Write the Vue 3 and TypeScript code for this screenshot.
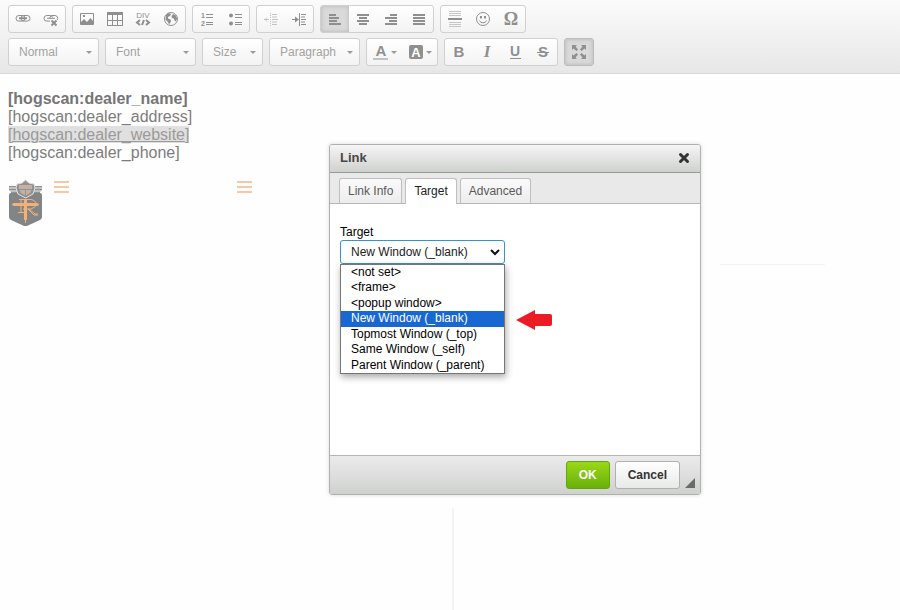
<script setup lang="ts">
import { ref } from 'vue'

interface Shape { d: string; line?: number; faint?: boolean }
interface Glyph { t: string; x: number; y: number; size: number; serif?: boolean; bold?: boolean; italic?: boolean }
interface Tool { id: string; label: string; shapes?: Shape[]; glyphs?: Glyph[]; on?: boolean; off?: boolean }

const circle = 'M8 1.5a6.5 6.5 0 1 1 0 13a6.5 6.5 0 1 1 0-13z'

const topRow: Tool[][] = [
  [
    { id: 'link', label: 'Link', shapes: [
      { d: 'M3.800 4.500h3.400a2.800 2.800 0 0 1 0 5.600H3.800a2.800 2.800 0 0 1 0-5.600zM8.800 4.500h3.400a2.800 2.800 0 0 1 0 5.600H8.800a2.800 2.800 0 0 1 0-5.600z', line: 1 },
      { d: 'M4 7.300h8', line: 2 },
    ] },
    { id: 'unlink', label: 'Unlink', shapes: [
      { d: 'M7 10.100H3.800a2.800 2.800 0 0 1 0-5.600h3.400a2.800 2.800 0 0 1 2.500 2M7 8a2.800 2.800 0 0 1 1.800-3.500h3.400a2.800 2.800 0 0 1 2 4.500', line: 1 },
      { d: 'M4 7.300h8', line: 1 },
      { d: 'M8.500 9.500l5 5M13.500 9.500l-5 5', line: 2 },
    ] },
  ],
  [
    { id: 'image', label: 'Image', shapes: [
      { d: 'M1.500 2.500h13v11h-13z', line: 1 },
      { d: 'M2 13v-2l3-3l3 3l3.500-4l2.500 3v3zM4 4h2v2h-2z' },
    ] },
    { id: 'table', label: 'Table', shapes: [
      { d: 'M0 1h16v3H0z' },
      { d: 'M.5 3.500v11h15v-11M5.500 4v10M10.500 4v10M0 9.500h16M0 14.500h16', line: 1 },
    ] },
    { id: 'div', label: 'Create Div Container', glyphs: [{ t: 'DIV', x: 8, y: 7, size: 8 }], shapes: [
      { d: 'M5 9l-3 2.500l3 2.500M11 9l3 2.500l-3 2.500M9 9l-2 5', line: 2 },
    ] },
    { id: 'iframe', label: 'IFrame', shapes: [
      { d: circle, line: 1 },
      { d: 'M3 4l3-2l2 1l-1 2l-2 1l0 1.500l2.500 1l.5 2l-2 3l-1-2.500l-2.500-2.500zM10 3l3 1.500l1 3l-1 3l-1.500-1l-.5-2l-2-.5l-.5-2z' },
    ] },
  ],
  [
    { id: 'numbered', label: 'Numbered List', glyphs: [{ t: '1', x: 4, y: 7, size: 7, bold: true }, { t: '2', x: 4, y: 15, size: 7, bold: true }], shapes: [
      { d: 'M7 3.500h7M7 6.500h7M7 11.500h7M7 13.500h7', line: 1 },
    ] },
    { id: 'bulleted', label: 'Bulleted List', shapes: [
      { d: 'M4 2.500a2 2 0 1 1 0 4a2 2 0 1 1 0-4zM4 10.500a2 2 0 1 1 0 4a2 2 0 1 1 0-4z' },
      { d: 'M8 3.500h7M8 6.500h7M8 11.500h7M8 13.500h7', line: 1 },
    ] },
  ],
  [
    { id: 'outdent', label: 'Decrease Indent', off: true, shapes: [
      { d: 'M7.500 2v1M7.500 4v1M7.500 6v1M7.500 8v1M7.500 10v1M7.500 12v1M7.500 14v1M9 3.500h5M9 6h5M9 8.500h6M9 11h5M9 13.500h5M1 8.500h5M4 6.500l-2 2l2 2', line: 1 },
    ] },
    { id: 'indent', label: 'Increase Indent', shapes: [
      { d: 'M8.500 2v13M10 3.500h5M10 6h4M10 8.500h5M10 11h4M10 13.500h5M1 8.500h5', line: 1 },
      { d: 'M4 5.500l4 3l-4 3z' },
    ] },
  ],
  [
    { id: 'left', label: 'Align Left', on: true, shapes: [{ d: 'M2 4h7M2 7h10M2 10h8M2 13h12', line: 2 }] },
    { id: 'center', label: 'Center', shapes: [{ d: 'M2 4h12M4 7h8M2 10h12M4 13h8', line: 2 }] },
    { id: 'right', label: 'Align Right', shapes: [{ d: 'M7 4h7M2 7h12M6 10h8M2 13h12', line: 2 }] },
    { id: 'justify', label: 'Justify', shapes: [{ d: 'M2 4h12M2 7h12M2 10h12M2 13h12', line: 2 }] },
  ],
  [
    { id: 'rule', label: 'Insert Horizontal Line', shapes: [
      { d: 'M2 .5h12M2 2.500h12M2 4.500h12M2 11.500h12M2 13.500h12M2 15.500h12', line: 1, faint: true },
      { d: 'M1 8h14', line: 2 },
    ] },
    { id: 'smiley', label: 'Smiley', shapes: [
      { d: circle + 'M4.500 9.500c1 3 6 3 7 0', line: 1 },
      { d: 'M5 5h2v2.500h-2zM9 5h2v2.500h-2z' },
    ] },
    { id: 'special', label: 'Insert Special Character', glyphs: [{ t: 'Ω', x: 8, y: 14, size: 18, serif: true, bold: true }] },
  ],
]

const styles: Tool[] = [
  { id: 'bold', label: 'Bold', glyphs: [{ t: 'B', x: 8, y: 13, size: 15, bold: true }] },
  { id: 'italic', label: 'Italic', glyphs: [{ t: 'I', x: 8, y: 13, size: 17, bold: true, italic: true, serif: true }] },
  { id: 'underline', label: 'Underline', glyphs: [{ t: 'U', x: 8, y: 12, size: 14, bold: true }], shapes: [{ d: 'M3 14.500h11', line: 1 }] },
  { id: 'strike', label: 'Strikethrough', glyphs: [{ t: 'S', x: 8, y: 13, size: 15, bold: true }], shapes: [{ d: 'M2 8.500h12', line: 1 }] },
]

const combos = [
  { label: 'Normal', small: false },
  { label: 'Font', small: false },
  { label: 'Size', small: true },
  { label: 'Paragraph', small: false },
]

const tabs = ['Link Info', 'Target', 'Advanced']
const activeTab = ref('Target')
const options = [
  '<not set>',
  '<frame>',
  '<popup window>',
  'New Window (_blank)',
  'Topmost Window (_top)',
  'Same Window (_self)',
  'Parent Window (_parent)',
]
const target = ref('New Window (_blank)')
</script>

<template>
  <div class="editor">
    <header class="toolbar">
      <div class="row">
        <div v-for="(group, g) in topRow" :key="g" class="group">
          <button v-for="tool in group" :key="tool.id" type="button" class="tool" :class="{ on: tool.on, off: tool.off }" :aria-label="tool.label">
            <svg class="icon" viewBox="0 0 16 16" aria-hidden="true">
              <path v-for="(s, i) in tool.shapes" :key="i" :d="s.d" :class="{ stroke: s.line, faint: s.faint }" :stroke-width="s.line" />
              <text v-for="c in tool.glyphs" :key="c.t" :x="c.x" :y="c.y" :font-size="c.size" :class="{ serif: c.serif, bold: c.bold }">{{ c.t }}</text>
            </svg>
          </button>
        </div>
      </div>
      <div class="row">
        <button v-for="combo in combos" :key="combo.label" type="button" class="group combo" :class="{ small: combo.small }">
          <span>{{ combo.label }}</span><i class="caret"></i>
        </button>
        <div class="group">
          <button type="button" class="tool color" aria-label="Text Color">
            <svg class="icon" viewBox="0 0 16 16" aria-hidden="true">
              <text x="8" y="12" font-size="15" class="bold">A</text>
              <path d="M0 14h15v2H0z" class="swatch" />
            </svg>
            <i class="caret"></i>
          </button>
          <button type="button" class="tool color" aria-label="Background Color">
            <svg class="icon" viewBox="0 0 16 16" aria-hidden="true">
              <rect x="1" y="1" width="14" height="14" rx="2" />
              <text x="8" y="13" font-size="13" class="bold light">A</text>
            </svg>
            <i class="caret"></i>
          </button>
        </div>
        <div class="group">
          <button v-for="tool in styles" :key="tool.id" type="button" class="tool" :aria-label="tool.label">
            <svg class="icon" viewBox="0 0 16 16" aria-hidden="true">
              <text v-for="c in tool.glyphs" :key="c.t" :x="c.x" :y="c.y" :font-size="c.size" :class="{ serif: c.serif, bold: c.bold, italic: c.italic }">{{ c.t }}</text>
              <path v-for="(s, i) in tool.shapes" :key="i" :d="s.d" class="stroke" :stroke-width="s.line" />
            </svg>
          </button>
        </div>
        <div class="group pressed">
          <button type="button" class="tool on" aria-label="Maximize">
            <svg class="icon" viewBox="0 0 16 16" aria-hidden="true">
              <path d="M1 1h5L4.500 2.500l2.500 3l-1.500 1.500l-3-2.500L1 6zM15 1h-5l1.500 1.500L9 5.500l1.500 1.500l3-2.500L15 6zM1 15h5l-1.500-1.500L7 10.500l-1.500-1.500l-3 2.500L1 10zM15 15h-5l1.500-1.500L9 10.500l1.500-1.500l3 2.500L15 10z" />
            </svg>
          </button>
        </div>
      </div>
    </header>

    <main class="content">
      <p class="address">
        <strong>[hogscan:dealer_name]</strong><br />
        [hogscan:dealer_address]<br />
        <a href="#website">[hogscan:dealer_website]</a><br />
        [hogscan:dealer_phone]
      </p>
      <div class="brand">
        <svg class="badge" viewBox="0 0 35 48" role="img" aria-label="Dealer badge">
          <path d="M1 7h9v8H3v-2L1 11zM25 7h9v4l-2 2v2h-7z" fill="#8f9193" />
          <path d="M1 9h9M2 12h8M25 9h9M25 12h8" stroke="#eeeeee" />
          <path d="M1 16q0-2 2-2h29q2 0 2 2v22q0 2-2 3l-12 5.500q-2.500 1-5 0L3 41q-2-1-2-3z" fill="#828486" />
          <path d="M9 5l5-1 3.500-3L21 4l5 1 1 4-2 6-7.500 4L10 15 8 9z" fill="#8f9193" stroke="#e2e2e2" />
          <path d="M11 6h13v4l-2 4-4.500 2.500L13 14l-2-4z" fill="#c0b2aa" />
          <path d="M12 7.500h11M14 13.500h7" stroke="#e2a981" />
          <path d="M10 10.500h15M17.500 10v6" stroke="#909294" />
          <g fill="none" stroke="#efb27c">
            <path d="M4 25.500l2-1h23l2 1-2 1H6z" fill="#efb27c" />
            <path d="M11 20.500h12q5 1 5 4.500t-5 5h-8M13 20v13M10 33.500h7M21 30l6 5h3M20 30l6 6h4" />
            <path d="M17.500 20v21" stroke-width="3" />
            <path d="M17.500 40v4" />
          </g>
        </svg>
        <svg class="bars" viewBox="0 0 15 14" aria-hidden="true"><path d="M0 3h15M0 8h15M0 13h15" /></svg>
        <svg class="bars second" viewBox="0 0 15 14" aria-hidden="true"><path d="M0 3h15M0 8h15M0 13h15" /></svg>
      </div>
    </main>
    <div class="guide across"></div>
    <div class="guide down"></div>

    <section class="dialog" role="dialog" aria-labelledby="dialog-title">
      <div class="title">
        <h1 id="dialog-title">Link</h1>
        <button type="button" class="close" aria-label="Close">
          <svg viewBox="0 0 12 12" aria-hidden="true"><path d="M2.500 2.500l7 7M9.500 2.500l-7 7" /></svg>
        </button>
      </div>
      <div class="tabs" role="tablist">
        <button v-for="tab in tabs" :key="tab" type="button" role="tab" class="tab" :class="{ active: tab === activeTab }" :aria-selected="tab === activeTab" @click="activeTab = tab">{{ tab }}</button>
      </div>
      <div class="body">
        <label for="target">Target</label>
        <div class="picker">
          <select id="target" v-model="target">
            <option v-for="o in options" :key="o">{{ o }}</option>
          </select>
          <svg class="chevron" viewBox="0 0 10 8" aria-hidden="true"><path d="M1 2l4 4 4-4" /></svg>
          <ul class="menu" role="listbox" aria-label="Target">
            <li v-for="o in options" :key="o" role="option" :aria-selected="o === target" :class="{ chosen: o === target }" @click="target = o">{{ o }}</li>
          </ul>
          <svg class="pointer" viewBox="0 0 36 20" aria-hidden="true"><path d="M0 10L19 0v4h15q2 0 2 2v8q0 2-2 2H19v4z" /></svg>
        </div>
      </div>
      <footer class="actions">
        <button type="button" class="action ok">OK</button>
        <button type="button" class="action">Cancel</button>
        <svg class="grip" viewBox="0 0 10 10" aria-hidden="true"><path d="M10 0v10H0z" /></svg>
      </footer>
    </section>
  </div>
</template>

<style>
body {
  background: #fefefe;
}
</style>

<style scoped>
.editor {
  position: relative;
  min-height: 100vh;
  overflow: hidden;
  box-sizing: border-box;
  font: 12px/16px "Liberation Sans", Arial, sans-serif;
}
.editor *,
.editor *::before {
  box-sizing: border-box;
}
button {
  font: inherit;
  margin: 0;
  padding: 0;
  cursor: pointer;
}
.toolbar {
  display: flex;
  flex-direction: column;
  gap: 5px;
  padding: 5px 8px 7px;
  border-bottom: 1px solid #d9d9d9;
  background: linear-gradient(#fbfbfb, #e7e7e7);
}
.row {
  display: flex;
  gap: 6px;
}
.group {
  display: flex;
  height: 28px;
  border: 1px solid #d0d0d0;
  border-radius: 3px;
  background: linear-gradient(#ffffff, #f3f3f3);
  overflow: hidden;
}
.tool {
  display: flex;
  align-items: center;
  justify-content: center;
  width: 28px;
  border: 0;
  background: none;
}
.tool.on {
  background: #dadada;
  box-shadow: inset 0 0 4px #b4b4b4;
}
.tool.off {
  opacity: 0.5;
}
.tool.color {
  width: 35px;
  gap: 2px;
}
.pressed {
  border-color: #bcbcbc;
}
.icon {
  width: 16px;
  height: 16px;
  overflow: visible;
  fill: #8f8f8f;
}
.icon .stroke {
  fill: none;
  stroke: #8f8f8f;
}
.icon .faint {
  stroke: #c6c6c6;
}
.icon .swatch {
  fill: #c2c2c2;
}
.icon text {
  text-anchor: middle;
}
.icon .bold {
  font-weight: bold;
}
.icon .italic {
  font-style: italic;
}
.icon .serif {
  font-family: "Liberation Serif", "Times New Roman", serif;
}
.icon .light {
  fill: #ffffff;
}
.combo {
  align-items: center;
  justify-content: space-between;
  width: 91px;
  padding: 0 6px 0 10px;
  color: #a2a2a2;
}
.combo.small {
  width: 61px;
}
.caret {
  flex: none;
  border: 3px solid transparent;
  border-top-color: #9a9a9a;
  border-bottom: 0;
}
.content {
  padding: 16px 8px;
  color: #7d7d7d;
}
.address {
  margin: 0;
  font-size: 16px;
  line-height: 18px;
}
.address strong {
  color: #757575;
}
.address a {
  color: #9a9a9a;
  background: #e0e0e0;
}
.brand {
  display: flex;
  align-items: flex-start;
  margin-top: 17px;
}
.badge {
  width: 35px;
  height: 48px;
}
.bars {
  width: 15px;
  height: 14px;
  margin-left: 11px;
  fill: none;
  stroke: #f7c9a2;
  stroke-width: 2;
}
.bars.second {
  margin-left: 168px;
}
.guide {
  position: absolute;
  background: #f3f3f3;
}
.across {
  left: 720px;
  top: 264px;
  width: 105px;
  height: 1px;
}
.down {
  left: 452px;
  top: 508px;
  bottom: 0;
  width: 2px;
}
.dialog {
  position: absolute;
  left: 329px;
  top: 144px;
  width: 372px;
  border: 1px solid #b0b0b0;
  border-radius: 3px;
  background: #ffffff;
  box-shadow: 0 0 4px rgba(0, 0, 0, 0.15);
}
.title {
  display: flex;
  align-items: center;
  justify-content: space-between;
  height: 28px;
  padding: 0 10px 2px;
  border-bottom: 1px solid #999999;
  border-radius: 2px 2px 0 0;
  background: linear-gradient(#f5f5f5, #cfd1cf);
}
.title h1 {
  margin: 0;
  font-size: 13px;
  color: #474747;
}
.close {
  display: flex;
  border: 0;
  background: none;
}
.close svg {
  width: 12px;
  height: 12px;
  stroke: #333333;
  stroke-width: 3;
  stroke-linecap: round;
}
.tabs {
  display: flex;
  align-items: flex-end;
  gap: 3px;
  height: 31px;
  padding: 0 9px;
  border-bottom: 1px solid #b6b6b6;
  background: #e9e9e9;
}
.tab {
  height: 25px;
  padding: 0 8px;
  border: 1px solid #bfbfbf;
  border-bottom: 0;
  border-radius: 3px 3px 0 0;
  background: linear-gradient(#fafafa, #ededed);
  color: #595959;
}
.tab.active {
  height: 26px;
  margin-bottom: -1px;
  padding-bottom: 2px;
  background: #ffffff;
  color: #222222;
}
.body {
  min-height: 251px;
  padding: 21px 10px;
  color: #000000;
}
.body label {
  display: block;
  line-height: 15px;
}
.picker {
  position: relative;
  width: 165px;
}
.picker select {
  appearance: none;
  display: block;
  width: 100%;
  height: 24px;
  padding: 0 10px;
  border: 1px solid #3793cc;
  border-radius: 3px;
  outline: 0;
  background: #ffffff;
  color: #222222;
  font: inherit;
}
.chevron {
  position: absolute;
  right: 5px;
  top: 8px;
  width: 10px;
  height: 8px;
  fill: none;
  stroke: #111111;
  stroke-width: 2;
  pointer-events: none;
}
.menu {
  position: absolute;
  top: 24px;
  left: 0;
  display: grid;
  grid-template-rows: repeat(7, 1fr);
  width: 100%;
  height: 110px;
  margin: 0;
  padding: 0;
  border: 1px solid #767676;
  background: #ffffff;
  box-shadow: 1px 3px 7px rgba(0, 0, 0, 0.35);
  line-height: 15px;
  list-style: none;
}
.menu li {
  padding-left: 10px;
}
.menu .chosen {
  background: #1967d2;
  color: #ffffff;
}
.pointer {
  position: absolute;
  left: 176px;
  top: 70px;
  width: 36px;
  height: 20px;
  fill: #ed1c24;
}
.actions {
  display: flex;
  align-items: center;
  justify-content: flex-end;
  gap: 5px;
  height: 39px;
  padding-right: 5px;
  border-top: 1px solid #b6b6b6;
  border-radius: 0 0 2px 2px;
  background: linear-gradient(#ebebeb, #cfd1cf);
}
.action {
  height: 28px;
  padding: 0 12px;
  border: 1px solid #b0b0b0;
  border-radius: 3px;
  background: linear-gradient(#ffffff, #e9e9e9);
  color: #333333;
  font-weight: bold;
}
.action.ok {
  border-color: #62a60a;
  background: linear-gradient(#9ad717, #69b10b);
  color: #ffffff;
}
.grip {
  align-self: flex-end;
  width: 10px;
  height: 10px;
  margin-bottom: 6px;
  fill: #6b6b6b;
}
</style>
